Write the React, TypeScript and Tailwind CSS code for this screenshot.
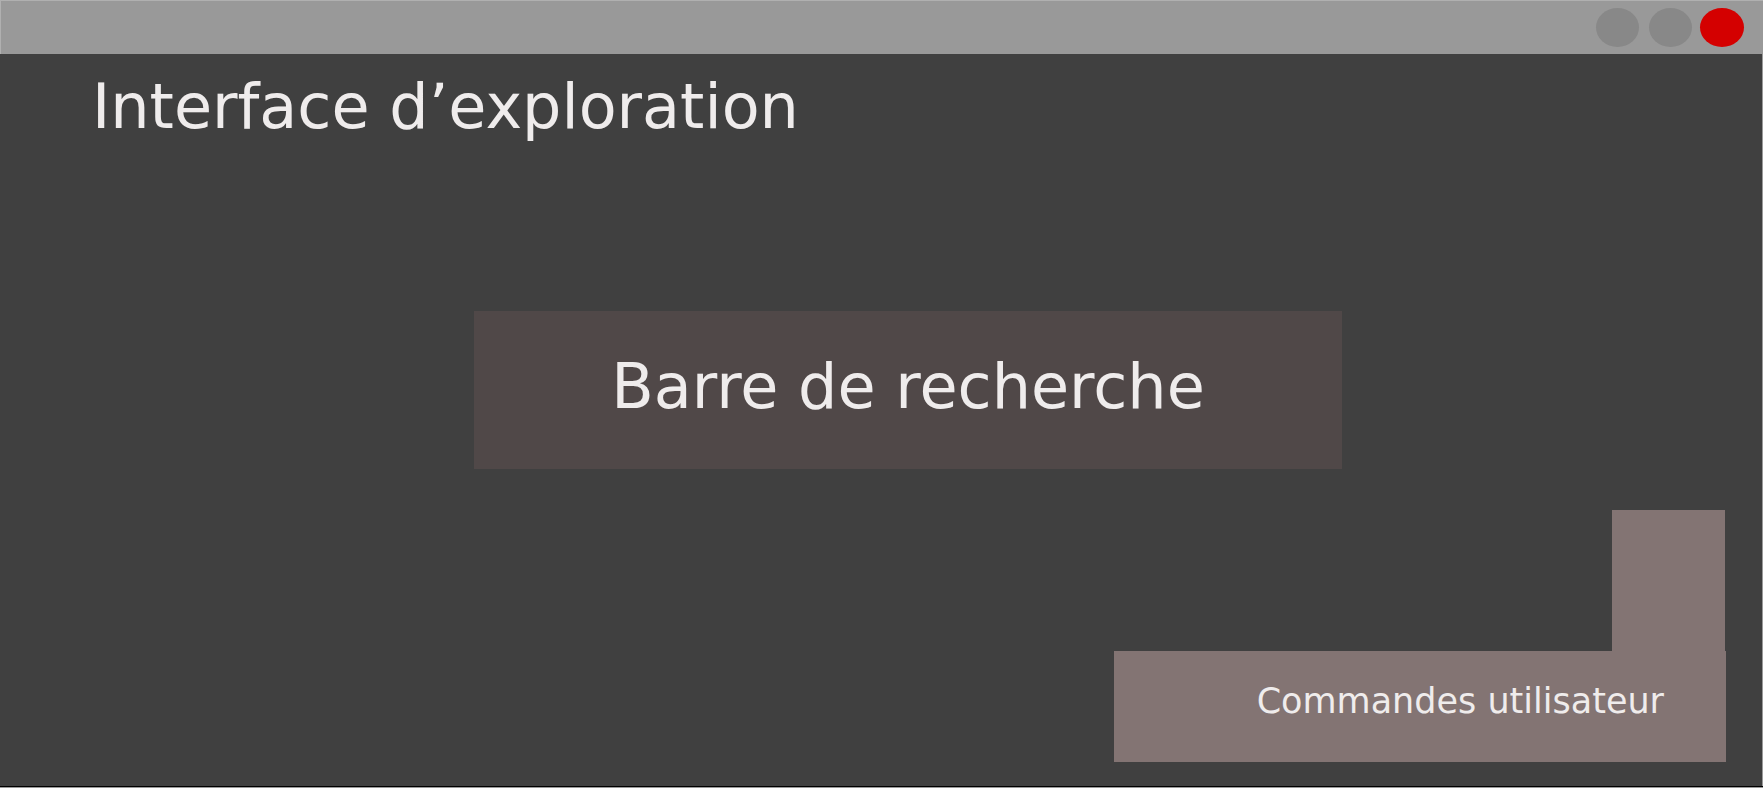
export default function App() {
  return (
    <div
      className="w-[1763px] h-[788px] flex flex-col bg-[#9a9a9a] overflow-hidden"
      style={{ fontFamily: '"DejaVu Sans", Verdana, sans-serif' }}
    >
      {/* barre de titre */}
      <div className="h-[54px] shrink-0 flex items-center justify-end pr-[19px] bg-[#999999] border-t border-l border-[#b0b0b0]">
        <div className="flex items-center mb-[1px]">
          <div className="w-[43px] h-[39px] rounded-[50%] bg-[#888888]" />
          <div className="w-[43px] h-[39px] rounded-[50%] bg-[#888888] ml-[10px]" />
          <div className="w-[44px] h-[39px] rounded-[50%] bg-[#d40000] ml-[8px]" />
        </div>
      </div>

      {/* contenu */}
      <div className="w-[1762px] h-[732px] shrink-0 flex flex-col bg-[#404040]">
        <h1 className="pt-[17px] pl-[92px] text-[62px] leading-[72px] text-[#efecec] font-normal">
          Interface d’exploration
        </h1>

        <div className="mt-[168px] ml-[474px] w-[868px] h-[158px] flex items-center justify-center bg-[#504848]">
          <span className="text-[62px] leading-[72px] text-[#efecec] mb-[6px]">Barre de recherche</span>
        </div>

        <div className="mt-[41px] flex flex-col items-end pr-[36px]">
          <div className="w-[113px] h-[141px] mr-[1px] bg-[#837473]" />
          <div className="w-[612px] h-[111px] flex items-center justify-end pr-[62px] pb-[10px] bg-[#837473]">
            <span className="text-[35px] leading-[41px] text-[#efecec]">Commandes utilisateur</span>
          </div>
        </div>
      </div>

      <div className="h-[1px] shrink-0 bg-black" />
    </div>
  )
}
